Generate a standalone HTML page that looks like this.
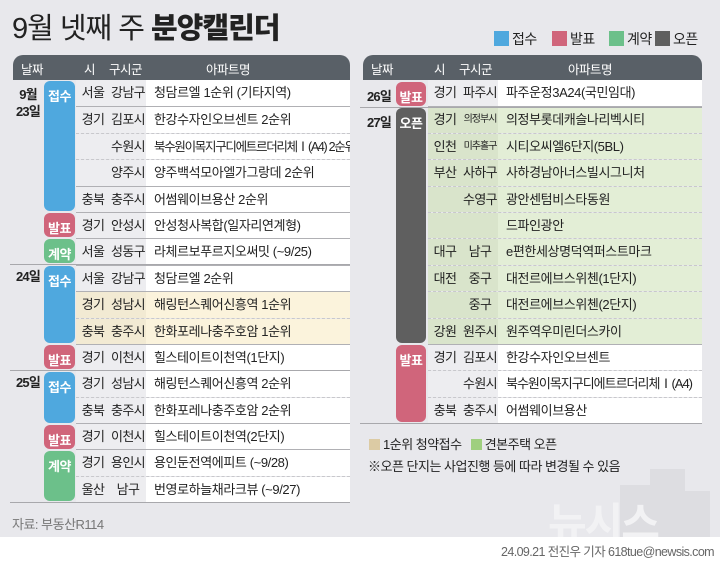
<!DOCTYPE html>
<html><head><meta charset="utf-8"><style>
*{margin:0;padding:0;box-sizing:border-box}
body{width:720px;height:563px;background:#e8e8ec;font-family:"Liberation Sans","Noto Sans CJK KR",sans-serif;position:relative;overflow:hidden;color:#222}
.abs{position:absolute}
.title{left:12px;top:5px;font-size:29px;letter-spacing:-1px;color:#222;white-space:nowrap}
.title b{font-weight:900}
.leg{top:29px;font-size:14px;white-space:nowrap;letter-spacing:-0.5px}
.leg i{display:inline-block;width:15px;height:15px;vertical-align:-2px;margin-right:3px}
.hdr{height:25px;background:#596067;border-radius:10px 10px 0 0;color:#fff;font-size:12.5px;letter-spacing:-0.5px}
.hdr span{position:absolute;top:4px}
.rows{position:absolute}
.r{height:26.4px;display:flex;font-size:13px;line-height:26px;border-top:1px dashed #c8c8cc;white-space:nowrap;letter-spacing:-0.6px}
.r.s{border-top:1px solid #b0b0b4}
.r:first-child{border-top:none}
.c1{width:34px;text-align:center;background:#ededf0}
.c2{width:36px;text-align:center;background:#ededf0}
.c3{flex:1;background:#fff;padding-left:8px;letter-spacing:-0.4px;overflow:hidden}
.y .c1,.y .c2{background:#f2ead3}.y .c3{background:#fbf3dc}
.g .c1,.g .c2{background:#d9e4cb}.g .c3{background:#e3eed6}
.bd{position:absolute;border-radius:6px;color:#fff;font-weight:bold;font-size:13px;text-align:center;padding-top:5px;letter-spacing:-0.5px}
.bl{background:#4fa8de}.pk{background:#d0657b}.gr{background:#6cc08a}.dk{background:#5f5f5f}
.dt{position:absolute;font-weight:bold;font-size:13px;text-align:center;line-height:17px;letter-spacing:-0.8px}
.line{position:absolute;height:1px;background:#a8a8ac}
</style></head><body>
<div class="abs" style="left:600px;top:465px;width:120px;height:72px;opacity:.5">
<svg width="120" height="72"><g fill="#d4d4d8"><rect x="20" y="20" width="40" height="52"/><rect x="50" y="4" width="35" height="68"/><rect x="80" y="26" width="30" height="46"/></g></svg></div>
<div class="abs" style="left:548px;top:490px;font-size:42px;font-weight:bold;color:#f2f2f4;letter-spacing:-2px">뉴시스</div>

<div class="abs title">9월 넷째 주 <b>분양캘린더</b></div>
<div class="abs leg" style="left:494px"><i style="background:#4fa8de"></i>접수</div>
<div class="abs leg" style="left:552px"><i style="background:#d0657b"></i>발표</div>
<div class="abs leg" style="left:609px"><i style="background:#6cc08a"></i>계약</div>
<div class="abs leg" style="left:655px"><i style="background:#5f5f5f"></i>오픈</div>

<!-- LEFT -->
<div class="abs hdr" style="left:13px;top:55px;width:337px">
<span style="left:8px">날짜</span><span style="left:71px">시</span><span style="left:96px">구시군</span><span style="left:193px">아파트명</span></div>
<div class="rows" style="left:76px;top:80px;width:274px">
<div class="r"><div class="c1">서울</div><div class="c2">강남구</div><div class="c3">청담르엘 1순위 (기타지역)</div></div>
<div class="r s"><div class="c1">경기</div><div class="c2">김포시</div><div class="c3">한강수자인오브센트 2순위</div></div>
<div class="r"><div class="c1"></div><div class="c2">수원시</div><div class="c3" style="letter-spacing:-1.3px;font-size:12.5px">북수원이목지구디에트르더리체Ⅰ(A4) 2순위</div></div>
<div class="r"><div class="c1"></div><div class="c2">양주시</div><div class="c3">양주백석모아엘가그랑데 2순위</div></div>
<div class="r s"><div class="c1">충북</div><div class="c2">충주시</div><div class="c3">어썸웨이브용산 2순위</div></div>
<div class="r s"><div class="c1">경기</div><div class="c2">안성시</div><div class="c3">안성청사복합(일자리연계형)</div></div>
<div class="r s"><div class="c1">서울</div><div class="c2">성동구</div><div class="c3">라체르보푸르지오써밋 (~9/25)</div></div>
<div class="r s"><div class="c1">서울</div><div class="c2">강남구</div><div class="c3">청담르엘 2순위</div></div>
<div class="r y s"><div class="c1">경기</div><div class="c2">성남시</div><div class="c3">해링턴스퀘어신흥역 1순위</div></div>
<div class="r y"><div class="c1">충북</div><div class="c2">충주시</div><div class="c3">한화포레나충주호암 1순위</div></div>
<div class="r s"><div class="c1">경기</div><div class="c2">이천시</div><div class="c3">힐스테이트이천역(1단지)</div></div>
<div class="r s"><div class="c1">경기</div><div class="c2">성남시</div><div class="c3">해링턴스퀘어신흥역 2순위</div></div>
<div class="r"><div class="c1">충북</div><div class="c2">충주시</div><div class="c3">한화포레나충주호암 2순위</div></div>
<div class="r s"><div class="c1">경기</div><div class="c2">이천시</div><div class="c3">힐스테이트이천역(2단지)</div></div>
<div class="r s"><div class="c1">경기</div><div class="c2">용인시</div><div class="c3">용인둔전역에피트 (~9/28)</div></div>
<div class="r"><div class="c1">울산</div><div class="c2">남구</div><div class="c3">번영로하늘채라크뷰 (~9/27)</div></div>
</div>
<div class="line" style="left:10px;top:264px;width:340px"></div>
<div class="line" style="left:10px;top:370px;width:340px"></div>
<div class="line" style="left:10px;top:502px;width:340px"></div>
<div class="dt" style="left:13px;top:86px;width:30px">9월<br>23일</div>
<div class="dt" style="left:13px;top:268px;width:30px">24일</div>
<div class="dt" style="left:13px;top:374px;width:30px">25일</div>
<div class="bd bl" style="left:44px;top:81px;width:31px;height:130px">접수</div>
<div class="bd pk" style="left:44px;top:213px;width:31px;height:24px">발표</div>
<div class="bd gr" style="left:44px;top:239px;width:31px;height:24px">계약</div>
<div class="bd bl" style="left:44px;top:266px;width:31px;height:77px">접수</div>
<div class="bd pk" style="left:44px;top:345px;width:31px;height:24px">발표</div>
<div class="bd bl" style="left:44px;top:372px;width:31px;height:51px">접수</div>
<div class="bd pk" style="left:44px;top:425px;width:31px;height:24px">발표</div>
<div class="bd gr" style="left:44px;top:451px;width:31px;height:50px">계약</div>

<!-- RIGHT -->
<div class="abs hdr" style="left:363px;top:55px;width:339px">
<span style="left:8px">날짜</span><span style="left:71px">시</span><span style="left:96px">구시군</span><span style="left:205px">아파트명</span></div>
<div class="rows" style="left:428px;top:80px;width:274px">
<div class="r"><div class="c1">경기</div><div class="c2">파주시</div><div class="c3">파주운정3A24(국민임대)</div></div>
<div class="r g s"><div class="c1">경기</div><div class="c2" style="font-size:10px;letter-spacing:-1px">의정부시</div><div class="c3">의정부롯데캐슬나리벡시티</div></div>
<div class="r g"><div class="c1">인천</div><div class="c2" style="font-size:10px;letter-spacing:-1px">미추홀구</div><div class="c3">시티오씨엘6단지(5BL)</div></div>
<div class="r g"><div class="c1">부산</div><div class="c2">사하구</div><div class="c3">사하경남아너스빌시그니처</div></div>
<div class="r g"><div class="c1"></div><div class="c2">수영구</div><div class="c3">광안센텀비스타동원</div></div>
<div class="r g"><div class="c1"></div><div class="c2"></div><div class="c3">드파인광안</div></div>
<div class="r g"><div class="c1">대구</div><div class="c2">남구</div><div class="c3">e편한세상명덕역퍼스트마크</div></div>
<div class="r g"><div class="c1">대전</div><div class="c2">중구</div><div class="c3">대전르에브스위첸(1단지)</div></div>
<div class="r g"><div class="c1"></div><div class="c2">중구</div><div class="c3">대전르에브스위첸(2단지)</div></div>
<div class="r g"><div class="c1">강원</div><div class="c2">원주시</div><div class="c3">원주역우미린더스카이</div></div>
<div class="r s"><div class="c1">경기</div><div class="c2">김포시</div><div class="c3">한강수자인오브센트</div></div>
<div class="r"><div class="c1"></div><div class="c2">수원시</div><div class="c3" style="letter-spacing:-1px">북수원이목지구디에트르더리체Ⅰ(A4)</div></div>
<div class="r"><div class="c1">충북</div><div class="c2">충주시</div><div class="c3">어썸웨이브용산</div></div>
</div>
<div class="line" style="left:360px;top:107px;width:342px"></div>
<div class="line" style="left:360px;top:423px;width:342px"></div>
<div class="dt" style="left:363px;top:88px;width:32px">26일</div>
<div class="dt" style="left:363px;top:114px;width:32px">27일</div>
<div class="bd pk" style="left:396px;top:82px;width:30px;height:24px">발표</div>
<div class="bd dk" style="left:396px;top:108px;width:30px;height:235px">오픈</div>
<div class="bd pk" style="left:396px;top:345px;width:30px;height:77px">발표</div>

<div class="abs" style="left:369px;top:434px;font-size:13px;white-space:nowrap;letter-spacing:-0.5px"><i style="display:inline-block;width:11px;height:11px;background:#dccba4;vertical-align:-1px;margin-right:3px"></i>1순위 청약접수 <i style="display:inline-block;width:11px;height:11px;background:#9fcf7f;vertical-align:-1px;margin:0 3px 0 6px"></i>견본주택 오픈</div>
<div class="abs" style="left:368px;top:456px;font-size:13px;white-space:nowrap;letter-spacing:-0.5px">※오픈 단지는 사업진행 등에 따라 변경될 수 있음</div>

<div class="abs" style="left:12px;top:514px;font-size:13px;color:#777;letter-spacing:-0.5px">자료: 부동산R114</div>
<div class="abs" style="left:0;top:537px;width:720px;height:26px;background:#fff"></div>
<div class="abs" style="right:6px;top:541px;font-size:12.5px;color:#666;letter-spacing:-0.6px">24.09.21 전진우 기자 618tue@newsis.com</div>
</body></html>
